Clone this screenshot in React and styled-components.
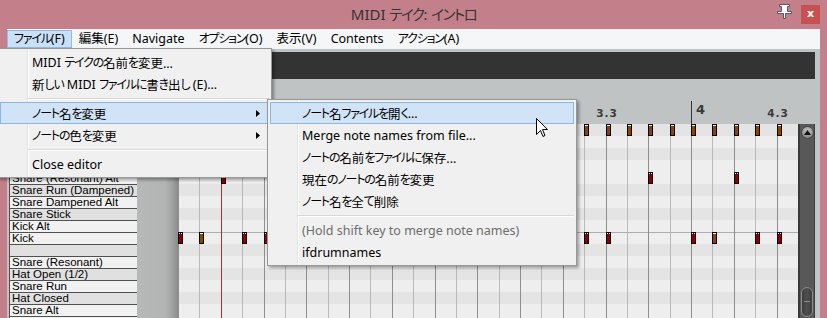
import React from 'react';
import styled, { createGlobalStyle } from 'styled-components';

const GlobalStyle = createGlobalStyle`
  html, body {
    margin: 0;
    padding: 0;
    background: #c4808a;
  }
  body {
    overflow: hidden;
  }
`;

const UI_FONT = `"Noto Sans", "Noto Sans CJK JP", sans-serif`;

// grid geometry: one eighth note = 21.375px
const gx = (i) => Math.round(i * 21.375);

const Window = styled.div`
  position: relative;
  width: 827px;
  height: 318px;
  overflow: hidden;
  background: #c4808a;
  font-family: ${UI_FONT};
  font-feature-settings: "palt";
  display: flex;
  flex-direction: column;
`;

// kana runs: the reference UI font has narrow kana, so tighten them
const Kana = styled.span`
  font-size: 0.96em;
  letter-spacing: -0.1em;
`;

const KANA = /([\u3040-\u30ff]+)/;

function T({ children }) {
  return String(children)
    .split(KANA)
    .map((part, k) => (k % 2 ? <Kana key={k}>{part}</Kana> : part));
}

const TitleBar = styled.div`
  height: 29px;
  flex: none;
  display: grid;
  grid-template-columns: 1fr auto 1fr;
`;

const Title = styled.div`
  grid-column: 2;
  font-size: 15px;
  line-height: 29px;
  color: #333;
  white-space: nowrap;
`;

const TitleButtons = styled.div`
  grid-column: 3;
  justify-self: end;
  display: flex;
  align-items: flex-start;
  gap: 9px;
  padding: 4px 7px 0 0;
`;

const CloseButton = styled.div`
  width: 19px;
  height: 19px;
  margin-top: 1px;
  background: #c75050;
  color: #fff;
  font: bold 11px "DejaVu Sans", sans-serif;
  line-height: 17px;
  text-align: center;
`;

const Client = styled.div`
  flex: 1;
  min-height: 0;
  margin: 0 7px;
  background: #bfc3c3;
  display: flex;
  flex-direction: column;
`;

const MenuBar = styled.div`
  flex: none;
  height: 20px;
  box-sizing: border-box;
  padding: 1px 0;
  background: #f5f6f7;
  display: flex;
`;

const MenuBarItem = styled.div`
  box-sizing: border-box;
  height: 18px;
  padding: 0 6px;
  border: 1px solid ${(p) => (p.$open ? '#8fbce9' : 'transparent')};
  background: ${(p) => (p.$open ? '#c9e0f7' : 'transparent')};
  font-size: 12.5px;
  line-height: 16px;
  color: #000;
  white-space: nowrap;
`;

const Toolbar = styled.div`
  flex: none;
  height: 27px;
  margin: 3px 5px 0 0;
  background: #333333;
`;

const Ruler = styled.div`
  flex: none;
  height: 45px;
  padding-left: 171px;
`;

const TimeAxis = styled.div`
  position: relative;
  width: 620px;
  height: 100%;
`;

const BarTick = styled.div`
  position: absolute;
  top: 22px;
  bottom: 0;
  width: 1px;
  background: #333;
`;

const BarLabel = styled.div`
  position: absolute;
  top: 24px;
  font: bold 13px "DejaVu Sans", sans-serif;
  line-height: 13px;
  color: #3a3a3a;
`;

const BeatLabel = styled.div`
  position: absolute;
  top: 29px;
  transform: translateX(-50%);
  font: bold 10.5px "DejaVu Sans", sans-serif;
  letter-spacing: 1px;
  line-height: 11px;
  color: #3a3a3a;
`;

const Body = styled.div`
  flex: 1;
  min-height: 0;
  display: flex;
`;

const NameList = styled.div`
  flex: none;
  width: 130px;
  box-sizing: border-box;
  padding-left: 2px;
  overflow: hidden;
`;

const NameRow = styled.div`
  height: 12px;
  box-sizing: border-box;
  border-top: 1px solid #505050;
  border-left: 1px solid #505050;
  padding-left: 2px;
  background: ${(p) => (p.$black ? '#e0e0e0' : '#f1f1f1')};
  font: 11.5px "Liberation Sans", sans-serif;
  line-height: 11px;
  color: #000;
  white-space: nowrap;
  overflow: hidden;
`;

const KeyGutter = styled.div`
  flex: none;
  width: 41px;
  background: linear-gradient(
    to right,
    #b7b9b9 0,
    #b3b5b5 28px,
    #a2a4a4 35px,
    #8a8c8c 41px
  );
`;

const Grid = styled.div`
  position: relative;
  flex: none;
  width: 620px;
  overflow: hidden;
`;

const GridRow = styled.div`
  height: 12px;
  background: ${(p) => (p.$black ? '#e4e4e4' : '#eeeeee')};
  box-shadow: ${(p) => (p.$octave ? 'inset 0 1px 0 #adadad' : 'none')};
`;

const GridLine = styled.div`
  position: absolute;
  top: 0;
  bottom: 0;
  width: 1px;
  background: ${(p) => (p.$beat ? '#8e8e8e' : '#b9b9b9')};
`;

const Playhead = styled.div`
  position: absolute;
  top: 0;
  bottom: 0;
  width: 1px;
  background: #a83232;
`;

const Note = styled.div`
  position: absolute;
  width: 5px;
  height: 12px;
  box-sizing: border-box;
  border: 1px solid #000;
  background: ${(p) => (p.$soft ? '#8b4600' : '#8e0000')};

  &::before {
    content: '';
    position: absolute;
    left: 0;
    right: 0;
    top: 0;
    height: 1px;
    background: ${(p) =>
      p.$soft
        ? '#ffffff'
        : 'linear-gradient(to right, #fff 1px, #000 1px, #000 2px, #fff 2px)'};
  }
`;

const Scrollbar = styled.div`
  flex: none;
  width: 17px;
  box-sizing: border-box;
  border-left: 2px solid #3a3a3a;
  border-right: 1px solid #3e3e3e;
  background: #585858;
  display: flex;
  flex-direction: column;
  align-items: center;
  justify-content: space-between;
  padding: 2px 0 1px;
`;

const ScrollUp = styled.div`
  width: 13px;
  height: 13px;
  box-sizing: border-box;
  border-radius: 50%;
  border: 1px solid #444;
  background: radial-gradient(circle at 50% 35%, #c4c4c4 0, #9a9a9a 55%, #6c6c6c 100%);
  display: flex;
  align-items: center;
  justify-content: center;
`;

const ScrollThumb = styled.div`
  position: relative;
  width: 12px;
  height: 30px;
  box-sizing: border-box;
  border-radius: 6px;
  border: 1px solid #8c8c8c;
  background: linear-gradient(to right, #3e3e3e, #4e4e4e 50%, #3e3e3e);

  &::after {
    content: '';
    position: absolute;
    left: 2px;
    right: 2px;
    top: 13px;
    height: 1px;
    background: #8c8c8c;
  }
`;

const RightStrip = styled.div`
  flex: none;
  width: 5px;
  background: #c1c5c5;
`;

const Popup = styled.div`
  position: absolute;
  box-sizing: border-box;
  padding: 2px;
  border: 1px solid #979797;
  background:
    linear-gradient(
      to right,
      transparent 29px,
      #e2e3e3 29px,
      #e2e3e3 30px,
      #ffffff 30px,
      #ffffff 31px,
      transparent 31px
    ),
    #f0f0f0;
  box-shadow: 2px 2px 3px rgba(0, 0, 0, 0.35);
  font-size: 12.5px;
`;

const FileMenu = styled(Popup)`
  left: -3px;
  top: 48px;
  width: 275px;
  z-index: 2;
`;

const NoteNameMenu = styled(Popup)`
  left: 267px;
  top: 99px;
  width: 310px;
  z-index: 3;
`;

const MenuItem = styled.div`
  height: 22px;
  box-sizing: border-box;
  display: flex;
  align-items: center;
  padding: 0 8px 0 31px;
  border: 1px solid ${(p) => (p.$active ? '#86b8ea' : 'transparent')};
  background: ${(p) => (p.$active ? '#d1e3f6' : 'transparent')};
  color: ${(p) => (p.$disabled ? '#6d6d6d' : '#000')};
  white-space: pre;
`;

const SubArrow = styled.svg`
  margin-left: auto;
`;

const MenuSep = styled.div`
  height: 7px;
  margin-left: 28px;
  background: linear-gradient(
    to bottom,
    transparent 3px,
    #d7d7d7 3px,
    #d7d7d7 4px,
    #ffffff 4px,
    #ffffff 5px,
    transparent 5px
  );
`;

const Cursor = styled.svg`
  position: absolute;
  left: 536px;
  top: 118px;
  z-index: 5;
`;

const menuBarItems = ['ファイル(F)', '編集(E)', 'Navigate', 'オプション(O)', '表示(V)', 'Contents', 'アクション(A)'];

// pitch pattern from top row down (true = black key)
const rows = [
  { name: 'Hat Pedal', black: true },
  { name: 'Hat Open', black: false },
  { name: 'Crash', black: true },
  { name: 'Snare Rimshot', black: false },
  { name: 'Snare (Resonant) Alt', black: false },
  { name: 'Snare Run (Dampened)', black: true },
  { name: 'Snare Dampened Alt', black: false },
  { name: 'Snare Stick', black: true },
  { name: 'Kick Alt', black: false },
  { name: 'Kick', black: false, octave: true },
  { name: '', black: true },
  { name: 'Snare (Resonant)', black: false },
  { name: 'Hat Open (1/2)', black: true },
  { name: 'Snare Run', black: false },
  { name: 'Hat Closed', black: true },
  { name: 'Snare Alt', black: false },
  { name: 'Snare', black: false },
];

const notes = [];
for (let i = 0; i < 29; i++) notes.push({ row: 0, i, soft: true });
for (let i = 2; i < 29; i += 4) notes.push({ row: 4, i });
for (let b = 0; b < 4; b++) {
  notes.push({ row: 9, i: b * 8 });
  notes.push({ row: 9, i: b * 8 + 1, soft: true });
  notes.push({ row: 9, i: b * 8 + 3 });
  notes.push({ row: 9, i: b * 8 + 4 });
}

const rulerMarks = [];
for (let bar = 1; bar <= 4; bar++) {
  rulerMarks.push({ i: (bar - 1) * 8, label: String(bar), bar: true });
  rulerMarks.push({ i: (bar - 1) * 8 + 4, label: `${bar}.3` });
}

function Arrow() {
  return (
    <SubArrow width="4" height="7" viewBox="0 0 4 7">
      <path d="M0 0 L4 3.5 L0 7 Z" fill="#000" />
    </SubArrow>
  );
}

function PinIcon() {
  return (
    <svg width="15" height="15" viewBox="0 0 15 15">
      <path
        d="M2.5 0.5 H12.5 V2.5 H10.5 V7.5 H14.5 V9.5 H8.5 V14.5 H6.5 V9.5 H0.5 V7.5 H4.5 V2.5 H2.5 Z"
        fill="#fff"
        stroke="#5a5a5a"
        strokeWidth="1"
      />
    </svg>
  );
}

export default function App() {
  return (
    <Window>
      <GlobalStyle />
      <TitleBar>
        <Title>
          <T>MIDI テイク: イントロ</T>
        </Title>
        <TitleButtons>
          <PinIcon />
          <CloseButton>x</CloseButton>
        </TitleButtons>
      </TitleBar>

      <Client>
        <MenuBar>
          {menuBarItems.map((m, k) => (
            <MenuBarItem key={m} $open={k === 0}>
              <T>{m}</T>
            </MenuBarItem>
          ))}
        </MenuBar>
        <Toolbar />
        <Ruler>
          <TimeAxis>
            {rulerMarks.map((m) =>
              m.bar ? (
                <React.Fragment key={m.label}>
                  <BarTick style={{ left: gx(m.i) }} />
                  <BarLabel style={{ left: gx(m.i) + 5 }}>{m.label}</BarLabel>
                </React.Fragment>
              ) : (
                <BeatLabel key={m.label} style={{ left: gx(m.i) + 1 }}>
                  {m.label}
                </BeatLabel>
              )
            )}
          </TimeAxis>
        </Ruler>
        <Body>
          <NameList>
            {rows.map((r, k) => (
              <NameRow key={k} $black={r.black}>
                {r.name}
              </NameRow>
            ))}
          </NameList>
          <KeyGutter />
          <Grid>
            {rows.map((r, k) => (
              <GridRow key={k} $black={r.black} $octave={r.octave} />
            ))}
            {Array.from({ length: 29 }, (_, i) => (
              <GridLine key={i} $beat={i % 2 === 0} style={{ left: gx(i) }} />
            ))}
            <Playhead style={{ left: gx(2) }} />
            {notes.map((n, k) => (
              <Note key={k} $soft={n.soft} style={{ left: gx(n.i), top: n.row * 12 }} />
            ))}
          </Grid>
          <Scrollbar>
            <ScrollUp>
              <svg width="7" height="5" viewBox="0 0 7 5">
                <path d="M3.5 0 L7 5 L0 5 Z" fill="#111" />
              </svg>
            </ScrollUp>
            <ScrollThumb />
          </Scrollbar>
          <RightStrip />
        </Body>
      </Client>

      <FileMenu>
        <MenuItem><T>MIDI テイクの名前を変更...</T></MenuItem>
        <MenuItem><T>新しい MIDI ファイルに書き出し (E)...</T></MenuItem>
        <MenuSep />
        <MenuItem $active>
          <T>ノート名を変更</T>
          <Arrow />
        </MenuItem>
        <MenuItem>
          <T>ノートの色を変更</T>
          <Arrow />
        </MenuItem>
        <MenuSep />
        <MenuItem>Close editor</MenuItem>
      </FileMenu>

      <NoteNameMenu>
        <MenuItem $active><T>ノート名ファイルを開く...</T></MenuItem>
        <MenuItem>Merge note names from file...</MenuItem>
        <MenuItem><T>ノートの名前をファイルに保存...</T></MenuItem>
        <MenuItem><T>現在のノートの名前を変更</T></MenuItem>
        <MenuItem><T>ノート名を全て削除</T></MenuItem>
        <MenuSep />
        <MenuItem $disabled>(Hold shift key to merge note names)</MenuItem>
        <MenuItem>ifdrumnames</MenuItem>
      </NoteNameMenu>

      <Cursor width="12" height="19" viewBox="0 0 12 19">
        <path
          d="M0.5 0.5 L0.5 16.5 L4.5 12.5 L7 18.5 L9 17.5 L6.5 11.5 L11.5 11.5 Z"
          fill="#fff"
          stroke="#000"
          strokeWidth="1"
          strokeLinejoin="miter"
        />
      </Cursor>
    </Window>
  );
}
